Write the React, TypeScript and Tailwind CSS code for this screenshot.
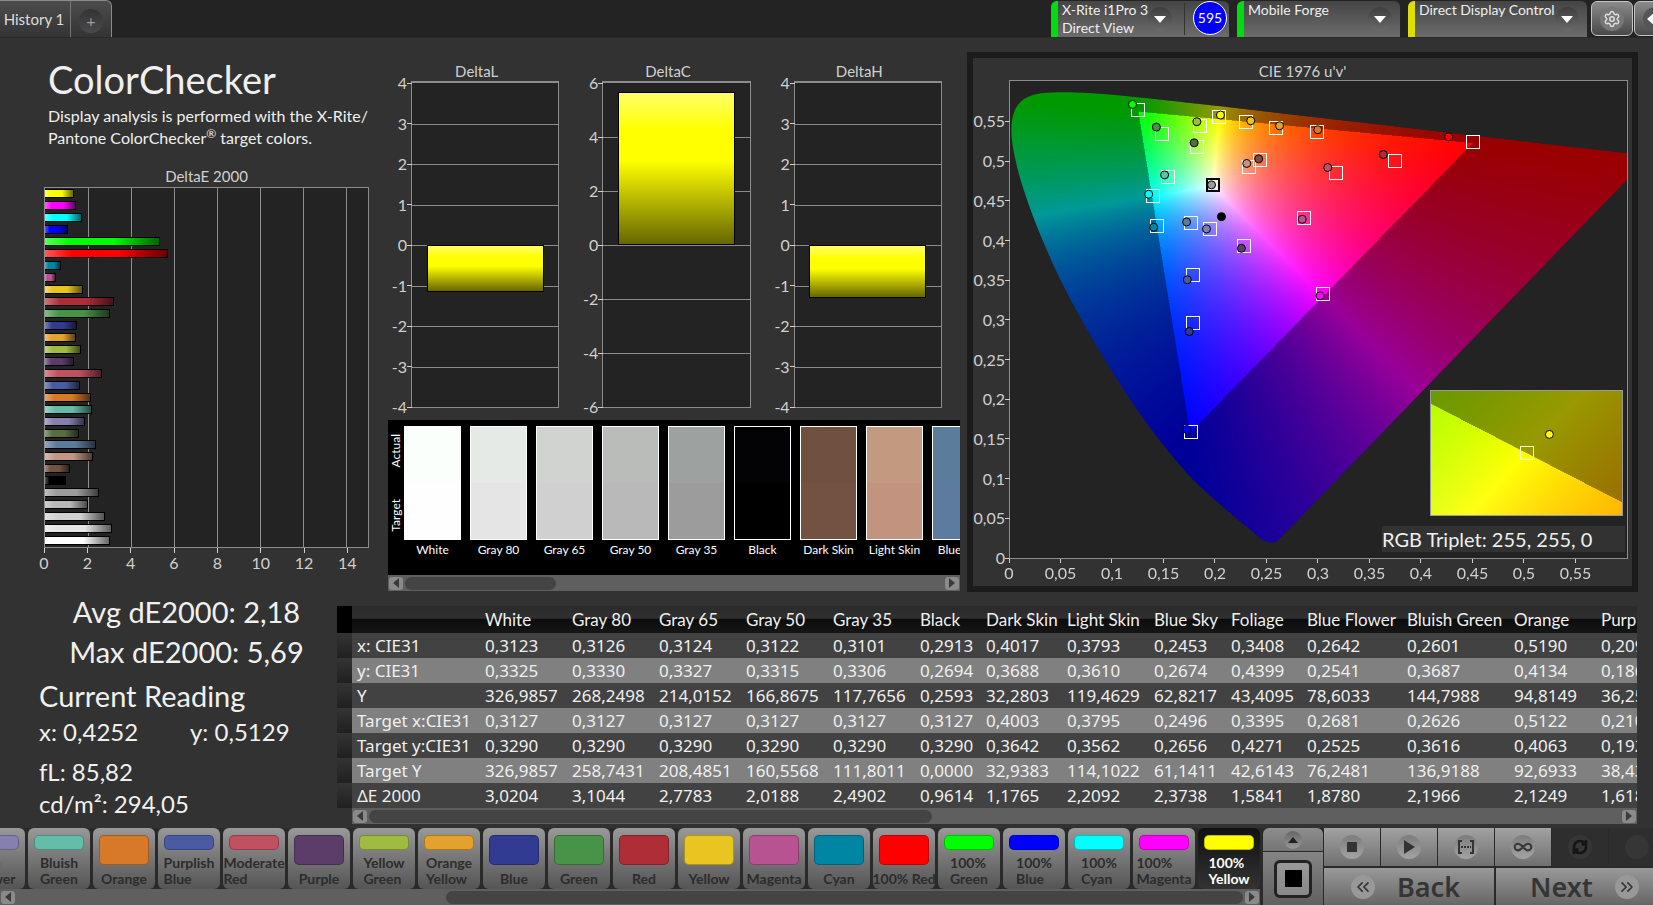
import { useEffect, useRef } from 'react'
import type { ReactNode } from 'react'
import {
  ChevronsLeft,
  ChevronsRight,
  Infinity as InfinityIcon,
  RefreshCw,
  Settings,
} from 'lucide-react'

type Vec2 = [number, number]

const AXIS_MAX = 0.601

const patches = [
  { name: '100% Yellow', color: '#ffff00', dE: 1.35, target: [0.2037, 0.5551], actual: [0.205, 0.5581] },
  { name: '100% Magenta', color: '#ff00ff', dE: 1.44, target: [0.305, 0.3321], actual: [0.3021, 0.3304] },
  { name: '100% Cyan', color: '#00ffff', dE: 1.72, target: [0.139, 0.4562], actual: [0.1351, 0.4583] },
  { name: '100% Blue', color: '#0000ff', dE: 1.07, target: [0.1759, 0.1591], actual: [0.172, 0.162] },
  { name: '100% Green', color: '#00ff00', dE: 5.35, target: [0.1248, 0.5644], actual: [0.1193, 0.5715] },
  { name: '100% Red', color: '#ff0000', dE: 5.69, target: [0.4506, 0.5244], actual: [0.4273, 0.5307] },
  { name: 'Cyan', color: '#0085a3', dE: 0.75, target: [0.1435, 0.4184], actual: [0.14, 0.4167] },
  { name: 'Magenta', color: '#b85391', dE: 0.52, target: [0.2866, 0.428], actual: [0.2846, 0.4268] },
  { name: 'Yellow', color: '#e9c521', dE: 1.77, target: [0.2299, 0.5497], actual: [0.2345, 0.5509] },
  { name: 'Red', color: '#ae2d37', dE: 3.2, target: [0.3752, 0.5], actual: [0.3636, 0.5084] },
  { name: 'Green', color: '#479347', dE: 3.02, target: [0.1477, 0.5345], actual: [0.1426, 0.5429] },
  { name: 'Blue', color: '#323b92', dE: 1.49, target: [0.1782, 0.2955], actual: [0.1746, 0.2854] },
  { name: 'Orange Yellow', color: '#e5a12e', dE: 1.44, target: [0.2587, 0.5417], actual: [0.2626, 0.5446] },
  { name: 'Yellow Green', color: '#9fbb42', dE: 1.67, target: [0.1846, 0.5446], actual: [0.182, 0.5497] },
  { name: 'Purple', color: '#5c3d6a', dE: 1.35, target: [0.2283, 0.3931], actual: [0.2254, 0.3902] },
  { name: 'Moderate Red', color: '#c25160', dE: 2.65, target: [0.3176, 0.4848], actual: [0.3095, 0.492] },
  { name: 'Purplish Blue', color: '#4a5ba3', dE: 1.62, target: [0.1782, 0.3569], actual: [0.1727, 0.3506] },
  { name: 'Orange', color: '#d87829', dE: 2.12, target: [0.2995, 0.5366], actual: [0.2998, 0.5396] },
  { name: 'Bluish Green', color: '#64bda8', dE: 2.2, target: [0.1539, 0.4798], actual: [0.1506, 0.4827] },
  { name: 'Blue Flower', color: '#8580b0', dE: 1.88, target: [0.1947, 0.415], actual: [0.1914, 0.4146] },
  { name: 'Foliage', color: '#576c41', dE: 1.58, target: [0.182, 0.5181], actual: [0.1794, 0.5231] },
  { name: 'Blue Sky', color: '#5d7c9d', dE: 2.37, target: [0.1759, 0.4217], actual: [0.172, 0.4234] },
  { name: 'Light Skin', color: '#c29682', dE: 2.21, target: [0.2328, 0.4928], actual: [0.2306, 0.4971] },
  { name: 'Dark Skin', color: '#735244', dE: 1.18, target: [0.2432, 0.5013], actual: [0.2422, 0.5029] },
  { name: 'Black', color: '#000000', dE: 0.96, target: null, actual: [0.206, 0.4301] },
  { name: 'Gray 35', color: '#9c9c9c', dE: 2.49, target: [0.1976, 0.4697], actual: [0.1963, 0.4701] },
  { name: 'Gray 50', color: '#b8b8b8', dE: 2.02, target: null, actual: null },
  { name: 'Gray 65', color: '#d0d0d0', dE: 2.78, target: null, actual: null },
  { name: 'Gray 80', color: '#e6e6e6', dE: 3.1, target: null, actual: null },
  { name: 'White', color: '#ffffff', dE: 3.02, target: null, actual: null },
]

const swatches = [
  { name: 'White', actual: '#fbfffb', target: '#fefefe' },
  { name: 'Gray 80', actual: '#e5eae6', target: '#e5e5e5' },
  { name: 'Gray 65', actual: '#d1d3d0', target: '#d0d0d0' },
  { name: 'Gray 50', actual: '#babcb9', target: '#b9b9b9' },
  { name: 'Gray 35', actual: '#9da19f', target: '#9c9c9c' },
  { name: 'Black', actual: '#030305', target: '#000000' },
  { name: 'Dark Skin', actual: '#705140', target: '#735242' },
  { name: 'Light Skin', actual: '#c3997f', target: '#c29480' },
  { name: 'Blue Sky', actual: '#5a7d9d', target: '#5d7a9f' },
]

const columns = [
  { name: 'White', width: 'w-[87px]', values: ['0,3123', '0,3325', '326,9857', '0,3127', '0,3290', '326,9857', '3,0204'] },
  { name: 'Gray 80', width: 'w-[87px]', values: ['0,3126', '0,3330', '268,2498', '0,3127', '0,3290', '258,7431', '3,1044'] },
  { name: 'Gray 65', width: 'w-[87px]', values: ['0,3124', '0,3327', '214,0152', '0,3127', '0,3290', '208,4851', '2,7783'] },
  { name: 'Gray 50', width: 'w-[87px]', values: ['0,3122', '0,3315', '166,8675', '0,3127', '0,3290', '160,5568', '2,0188'] },
  { name: 'Gray 35', width: 'w-[87px]', values: ['0,3101', '0,3306', '117,7656', '0,3127', '0,3290', '111,8011', '2,4902'] },
  { name: 'Black', width: 'w-[66px]', values: ['0,2913', '0,2694', '0,2593', '0,3127', '0,3290', '0,0000', '0,9614'] },
  { name: 'Dark Skin', width: 'w-[81px]', values: ['0,4017', '0,3688', '32,2803', '0,4003', '0,3642', '32,9383', '1,1765'] },
  { name: 'Light Skin', width: 'w-[87px]', values: ['0,3793', '0,3610', '119,4629', '0,3795', '0,3562', '114,1022', '2,2092'] },
  { name: 'Blue Sky', width: 'w-[77px]', values: ['0,2453', '0,2674', '62,8217', '0,2496', '0,2656', '61,1411', '2,3738'] },
  { name: 'Foliage', width: 'w-[76px]', values: ['0,3408', '0,4399', '43,4095', '0,3395', '0,4271', '42,6143', '1,5841'] },
  { name: 'Blue Flower', width: 'w-[100px]', values: ['0,2642', '0,2541', '78,6033', '0,2681', '0,2525', '76,2481', '1,8780'] },
  { name: 'Bluish Green', width: 'w-[107px]', values: ['0,2601', '0,3687', '144,7988', '0,2626', '0,3616', '136,9188', '2,1966'] },
  { name: 'Orange', width: 'w-[87px]', values: ['0,5190', '0,4134', '94,8149', '0,5122', '0,4063', '92,6933', '2,1249'] },
  { name: 'Purplish Blue', width: 'w-[117px]', values: ['0,2095', '0,1862', '36,2541', '0,2109', '0,1926', '38,4327', '1,6182'] },
]

const rowNames = ['x: CIE31', 'y: CIE31', 'Y', 'Target x:CIE31', 'Target y:CIE31', 'Target Y', 'ΔE 2000']

const colorButtons = [
  { lines: ['Blue', 'Flower'], color: '#8580b0' },
  { lines: ['Bluish', 'Green'], color: '#64bda8' },
  { lines: ['Orange'], color: '#d87829' },
  { lines: ['Purplish', 'Blue'], color: '#4a5ba3' },
  { lines: ['Moderate', 'Red'], color: '#c25160' },
  { lines: ['Purple'], color: '#5c3d6a' },
  { lines: ['Yellow', 'Green'], color: '#9fbb42' },
  { lines: ['Orange', 'Yellow'], color: '#e5a12e' },
  { lines: ['Blue'], color: '#323b92' },
  { lines: ['Green'], color: '#479347' },
  { lines: ['Red'], color: '#ae2d37' },
  { lines: ['Yellow'], color: '#e9c521' },
  { lines: ['Magenta'], color: '#b85391' },
  { lines: ['Cyan'], color: '#0085a3' },
  { lines: ['100% Red'], color: '#ff0000' },
  { lines: ['100%', 'Green'], color: '#00ff00' },
  { lines: ['100%', 'Blue'], color: '#0000ff' },
  { lines: ['100%', 'Cyan'], color: '#00ffff' },
  { lines: ['100%', 'Magenta'], color: '#ff00ff' },
  { lines: ['100%', 'Yellow'], color: '#ffff00', selected: true },
]

// CIE 1931 xy coordinates of the spectral locus, 380 nm to 700 nm
const locus: Vec2[] = [
  [0.1741, 0.005], [0.1689, 0.0069], [0.1644, 0.0109], [0.1566, 0.0177], [0.144, 0.0297],
  [0.1355, 0.0399], [0.1241, 0.0578], [0.1096, 0.0868], [0.0913, 0.1327], [0.0687, 0.2007],
  [0.0454, 0.295], [0.0235, 0.4127], [0.0082, 0.5384], [0.0039, 0.6548], [0.0139, 0.7502],
  [0.0389, 0.812], [0.0743, 0.8338], [0.1142, 0.8262], [0.1547, 0.8059], [0.1929, 0.7816],
  [0.2296, 0.7543], [0.3016, 0.6923], [0.3731, 0.6245], [0.4441, 0.5547], [0.5125, 0.4866],
  [0.5752, 0.4242], [0.627, 0.3725], [0.6915, 0.3083], [0.726, 0.274], [0.7347, 0.2653],
]

const xyToUv = ([x, y]: Vec2): Vec2 => {
  const d = -2 * x + 12 * y + 3
  return [(4 * x) / d, (9 * y) / d]
}

const uvToXy = ([u, v]: Vec2): Vec2 => {
  const d = 6 * u - 16 * v + 12
  return [(9 * u) / d, (4 * v) / d]
}

const xyToRgb = ([x, y]: Vec2) => {
  const z = 1 - x - y
  const linear = [
    3.2406 * x - 1.5372 * y - 0.4986 * z,
    -0.9689 * x + 1.8758 * y + 0.0415 * z,
    0.0557 * x - 0.204 * y + 1.057 * z,
  ]
  const peak = Math.max(...linear)
  // colours outside Rec. 709 are drawn dimmed
  const level = Math.min(...linear) < 0 ? 153 : 255
  return linear.map((c) => (Math.max(c, 0) / peak) * level)
}

const paint = (canvas: HTMLCanvasElement, toXy: (fx: number, fy: number) => Vec2) => {
  const ctx = canvas.getContext('2d')
  if (!ctx) return null
  const { width, height } = canvas
  const image = ctx.createImageData(width, height)
  for (let row = 0; row < height; row++) {
    for (let col = 0; col < width; col++) {
      const [r, g, b] = xyToRgb(toXy((col + 0.5) / width, 1 - (row + 0.5) / height))
      const i = (row * width + col) * 4
      image.data[i] = r
      image.data[i + 1] = g
      image.data[i + 2] = b
      image.data[i + 3] = 255
    }
  }
  ctx.putImageData(image, 0, 0)
  return ctx
}

const GamutCanvas = () => {
  const ref = useRef<HTMLCanvasElement>(null)

  useEffect(() => {
    const canvas = ref.current
    if (!canvas) return
    const ctx = paint(canvas, (fx, fy) => uvToXy([fx * AXIS_MAX, fy * AXIS_MAX]))
    if (!ctx) return
    const points = locus.map(xyToUv).map(([u, v]) => [
      (u / AXIS_MAX) * canvas.width,
      (1 - v / AXIS_MAX) * canvas.height,
    ])
    const last = points.length - 1
    const [x0, y0] = points[0]
    const [xEnd, yEnd] = points[last]
    ctx.globalCompositeOperation = 'destination-in'
    ctx.beginPath()
    ctx.moveTo(x0 + (xEnd - x0) * 0.012, y0 + (yEnd - y0) * 0.012)
    ctx.quadraticCurveTo(x0, y0, points[1][0], points[1][1])
    // Catmull-Rom spline through the remaining points
    for (let i = 1; i < last; i++) {
      const [ax, ay] = points[i - 1]
      const [bx, by] = points[i]
      const [cx, cy] = points[i + 1]
      const [dx, dy] = points[Math.min(i + 2, last)]
      ctx.bezierCurveTo(
        bx + (cx - ax) / 6,
        by + (cy - ay) / 6,
        cx - (dx - bx) / 6,
        cy - (dy - by) / 6,
        cx,
        cy,
      )
    }
    ctx.closePath()
    ctx.fill()
  }, [])

  return <canvas ref={ref} width={1238} height={952} className="absolute inset-0 h-full w-full" />
}

const InsetCanvas = () => {
  const ref = useRef<HTMLCanvasElement>(null)

  useEffect(() => {
    if (!ref.current) return
    paint(ref.current, (fx, fy) => [0.4193 + (fx - 0.5) * 0.05, 0.5053 + (fy - 0.5) * 0.05])
  }, [])

  return <canvas ref={ref} width={380} height={246} className="absolute inset-0 h-full w-full" />
}

const range = (from: number, to: number, step: number) =>
  Array.from({ length: Math.round((to - from) / step) + 1 }, (_, i) => from + i * step)

const formatTick = (value: number) => String(Math.round(value * 100) / 100).replace('.', ',')

const DeltaEChart = () => (
  <figure className="pr-[19px] pl-11 text-base leading-5 text-[#d0d0d0]">
    <figcaption className="pb-px text-center text-[15px]">DeltaE 2000</figcaption>
    <div className="relative h-[361px] border border-[#8c8c8c] bg-[#232323]">
      {range(2, 14, 2).map((t) => (
        <span
          key={t}
          className="absolute inset-y-0 w-px bg-[#8c8c8c]"
          style={{ left: `${(t / 15) * 100}%` }}
        />
      ))}
      <div className="relative flex h-full flex-col justify-around">
        {patches.map((p) => (
          <span
            key={p.name}
            className="h-[9px] border border-l-0 border-black bg-[linear-gradient(90deg,rgba(255,255,255,.35),transparent_22%,transparent_60%,rgba(0,0,0,.6))]"
            style={{ width: `${(p.dE / 15) * 100}%`, backgroundColor: p.color }}
          />
        ))}
      </div>
    </div>
    <div className="relative h-7">
      {range(0, 14, 2).map((t) => (
        <span
          key={t}
          className="absolute top-0 flex w-8 -translate-x-1/2 flex-col items-center"
          style={{ left: `${(t / 15) * 100}%` }}
        >
          <span className="h-[5px] w-px bg-[#d0d0d0]" />
          {t}
        </span>
      ))}
    </div>
  </figure>
)

type DeltaProps = { title: string; value: number; max: number; step: number }

const DeltaChart = ({ title, value, max, step }: DeltaProps) => {
  const top = value > 0 ? (max - value) / (2 * max) : 0.5
  return (
    <figure className="min-w-0 flex-1 text-base leading-5 text-[#d0d0d0]">
      <figcaption className="pl-1.5 text-center text-[15px]">{title}</figcaption>
      <div className="relative ml-[23px] h-[327px] border border-t-2 border-[#8c8c8c] bg-[#232323]">
        {range(-max, max, step).map((t) => (
          <span
            key={t}
            className="absolute -left-6 flex w-6 -translate-y-1/2 items-center justify-end"
            style={{ top: `${((max - t) / (2 * max)) * 100}%` }}
          >
            {t}
            <span className="h-px w-[5px] bg-[#d0d0d0]" />
          </span>
        ))}
        {range(-max + step, max - step, step).map((t) => (
          <span
            key={t}
            className="absolute inset-x-0 h-px bg-[#8c8c8c]"
            style={{ top: `${((max - t) / (2 * max)) * 100}%` }}
          />
        ))}
        <span
          className="absolute inset-x-[10%] border border-black bg-[linear-gradient(#ffff66,#ffff00_25%,#ffff00_45%,#666600)]"
          style={{ top: `${top * 100}%`, height: `${(Math.abs(value) / (2 * max)) * 100}%` }}
        />
      </div>
    </figure>
  )
}

const Arrow = ({ left = false }: { left?: boolean }) => (
  <button
    type="button"
    aria-label={left ? 'Scroll left' : 'Scroll right'}
    className="flex h-[13px] w-3.5 shrink-0 items-center justify-center rounded-[3px] bg-[#8a8a8a]"
  >
    <svg viewBox="0 0 8 10" className="h-2.5 w-2">
      <path d={left ? 'M7 0v10L1 5z' : 'M1 0v10l6-5z'} fill="#3a3a3a" />
    </svg>
  </button>
)

const ScrollBar = ({ thumb }: { thumb: string }) => (
  <div className="flex h-4 items-center gap-0.5 bg-[#5f5f5f] px-px">
    <Arrow left />
    <div className="flex h-[13px] flex-1">
      <span className={`h-full rounded-full bg-[#444444] ${thumb}`} />
    </div>
    <Arrow />
  </div>
)

const SwatchPanel = () => (
  <section className="mt-3 bg-black">
    <div className="flex h-[155px] overflow-hidden pt-1.5 text-xs leading-4 text-white">
      <div className="flex h-[114px] w-4 shrink-0 flex-col items-center justify-between py-2">
        <span className="rotate-180 [writing-mode:vertical-rl]">Actual</span>
        <span className="rotate-180 [writing-mode:vertical-rl]">Target</span>
      </div>
      <div className="flex gap-[9px]">
        {swatches.map((s) => (
          <div key={s.name} className="flex w-[57px] shrink-0 flex-col items-center gap-0.5 whitespace-nowrap">
            <div className="flex h-[114px] w-full flex-col border border-white">
              <span className="flex-1" style={{ backgroundColor: s.actual }} />
              <span className="flex-1" style={{ backgroundColor: s.target }} />
            </div>
            {s.name}
          </div>
        ))}
      </div>
    </div>
    <ScrollBar thumb="w-[28%]" />
  </section>
)

const CieChart = () => (
  <section className="mt-3.5 mr-[15px] flex min-w-0 flex-1 flex-col border-[6px] border-[#1b1b1b] pr-1 pl-9 text-base leading-5 text-[#d0d0d0]">
    <h2 className="pt-1 pr-8 text-center text-[15px] leading-[18px]">CIE 1976 u'v'</h2>
    <div className="relative h-[479px] border border-[#8c8c8c] bg-[#232323]">
      <GamutCanvas />
      <svg className="absolute inset-0 h-full w-full" aria-hidden="true">
        {patches.map(
          (p) =>
            p.target && (
              <svg
                key={p.name}
                x={`${(p.target[0] / AXIS_MAX) * 100}%`}
                y={`${(1 - p.target[1] / AXIS_MAX) * 100}%`}
                overflow="visible"
              >
                <rect
                  x={p.name === 'Gray 35' ? -6 : -6.5}
                  y={p.name === 'Gray 35' ? -6 : -6.5}
                  width={p.name === 'Gray 35' ? 12 : 13}
                  height={p.name === 'Gray 35' ? 12 : 13}
                  fill="none"
                  stroke={p.name === 'Gray 35' ? '#000' : '#fff'}
                  strokeWidth={p.name === 'Gray 35' ? 2 : 1}
                  shapeRendering="crispEdges"
                />
              </svg>
            ),
        )}
        {patches.map(
          (p) =>
            p.actual && (
              <svg
                key={p.name}
                x={`${(p.actual[0] / AXIS_MAX) * 100}%`}
                y={`${(1 - p.actual[1] / AXIS_MAX) * 100}%`}
                overflow="visible"
              >
                <circle r="4" fill={p.color} stroke="#000" />
              </svg>
            ),
        )}
      </svg>
      {range(0, 0.55, 0.05).map((t) => (
        <span
          key={t}
          className="absolute -left-10 flex w-10 -translate-y-1/2 items-center justify-end"
          style={{ top: `${(1 - t / AXIS_MAX) * 100}%` }}
        >
          {formatTick(t)}
          <span className="h-px w-[5px] bg-[#d0d0d0]" />
        </span>
      ))}
      <div className="absolute right-1 bottom-[42px] h-[126px] w-[193px] overflow-hidden border border-[#9a9a9a]">
        <InsetCanvas />
        <svg className="absolute inset-0 h-full w-full" aria-hidden="true">
          <svg x="50%" y="50%" overflow="visible">
            <rect
              x="-6.5"
              y="-6.5"
              width="13"
              height="13"
              fill="none"
              stroke="#ffffc0"
              shapeRendering="crispEdges"
            />
          </svg>
          <svg x="62%" y="35%" overflow="visible">
            <circle r="4" fill="#ffff00" stroke="#000" />
          </svg>
        </svg>
      </div>
      <p className="absolute right-0.5 bottom-1.5 w-[243px] bg-[#323232] text-xl leading-[26px] text-[#efefef]">
        RGB Triplet: 255, 255, 0
      </p>
    </div>
    <div className="relative h-[27px]">
      {range(0, 0.55, 0.05).map((t) => (
        <span
          key={t}
          className="absolute top-0 flex w-10 -translate-x-1/2 flex-col items-center"
          style={{ left: `${(t / AXIS_MAX) * 100}%` }}
        >
          <span className="h-1 w-px bg-[#d0d0d0]" />
          {formatTick(t)}
        </span>
      ))}
    </div>
  </section>
)

const Readings = () => (
  <section className="w-[337px] shrink-0 text-[#f0f0f0]">
    <div className="pl-9 text-center text-[29px] leading-10">
      <p>Avg dE2000: 2,18</p>
      <p>Max dE2000: 5,69</p>
    </div>
    <div className="pt-1 pl-[39px] text-2xl leading-8">
      <h2 className="text-[29px] leading-10">Current Reading</h2>
      <div className="flex pb-2">
        <p className="w-[151px]">x: 0,4252</p>
        <p>y: 0,5129</p>
      </div>
      <p>fL: 85,82</p>
      <p>cd/m²: 294,05</p>
    </div>
  </section>
)

const ReadingsTable = () => (
  <section className="mr-4 min-w-0 flex-1 pt-3.5">
    <div className="overflow-hidden">
      <table className="w-[1376px] table-fixed border-collapse text-left whitespace-nowrap text-[#efefef]">
        <thead>
          <tr className="h-[27px] bg-[linear-gradient(#2a2a2a,#303030_45%,#0c0c0c_50%,#161616)] text-[17px] leading-5">
            <td className="w-[15px] bg-black" />
            <td className="w-32" />
            {columns.map((c) => (
              <th key={c.name} scope="col" className={`pl-[5px] font-normal ${c.width}`}>
                {c.name}
              </th>
            ))}
          </tr>
        </thead>
        <tbody className="font-['Noto_Sans',sans-serif] text-[17px] leading-5">
          {rowNames.map((name, i) => (
            <tr key={name} className="h-[25px] bg-[#424242] even:bg-[#808080]">
              <td className="bg-linear-to-b from-[#343434] to-[#202020]" />
              <th scope="row" className="pl-[5px] font-normal">
                {name}
              </th>
              {columns.map((c) => (
                <td key={c.name} className="pl-[5px]">
                  {c.values[i]}
                </td>
              ))}
            </tr>
          ))}
        </tbody>
      </table>
    </div>
    <div className="pl-[15px]">
      <ScrollBar thumb="w-[45%]" />
    </div>
  </section>
)

type DeviceProps = { lines: string[]; bar: string; width: string; children?: ReactNode }

const Device = ({ lines, bar, width, children }: DeviceProps) => (
  <div
    className={`flex overflow-hidden rounded-t-md bg-linear-to-b from-[#454545] to-[#6c6c6c] text-sm leading-[18px] text-[#efefef] ${width}`}
  >
    <span className={`w-[7px] shrink-0 ${bar}`} />
    <p className="min-w-0 flex-1 pl-1 whitespace-nowrap">
      {lines.map((line) => (
        <span key={line} className="block">
          {line}
        </span>
      ))}
    </p>
    <button
      type="button"
      aria-label={`${lines[0]} menu`}
      className="mt-1.5 mr-2 flex h-6 w-6 shrink-0 items-center justify-center rounded-full bg-linear-to-b from-[#3e3e3e] to-[#6a6a6a]"
    >
      <svg viewBox="0 0 12 7" className="h-[7px] w-3">
        <path d="M0 0h12L6 7z" fill="#fff" />
      </svg>
    </button>
    {children}
  </div>
)

const TopBar = () => (
  <header className="flex h-[38px] border-b border-[#2a2a2a] bg-[#232323]">
    <nav className="flex rounded-tr-md border-t border-r border-[#8a8a8a] bg-linear-to-b from-[#4c4c4c] to-[#343434]">
      <button type="button" className="w-[71px] border-r border-[#777] pr-0.5 text-[15px] whitespace-nowrap text-[#dcdcdc]">
        History 1
      </button>
      <button type="button" aria-label="Add history" className="flex w-10 items-center justify-center">
        <span className="mt-1 flex h-6 w-6 items-center justify-center rounded-full bg-linear-to-b from-[#333] to-[#4a4a4a] text-base text-[#9a9a9a]">
          +
        </span>
      </button>
    </nav>
    <div className="ml-auto flex shrink-0 pt-px">
      <Device lines={['X-Rite i1Pro 3', 'Direct View']} bar="bg-[#00dd0f]" width="mr-2 w-[178px]">
        <span className="my-0.5 ml-1 w-px bg-[#333]" />
        <span className="mr-0.5 ml-2 flex h-[34px] w-[34px] shrink-0 items-center justify-center rounded-full border border-white bg-[#0000ff] text-sm text-white">
          595
        </span>
      </Device>
      <Device lines={['Mobile Forge']} bar="bg-[#00dd0f]" width="mr-2 w-[163px]" />
      <Device lines={['Direct Display Control']} bar="bg-[#dede00]" width="mr-1 w-[179px]" />
      <button
        type="button"
        aria-label="Settings"
        className="flex h-[35px] w-[42px] items-center justify-center rounded-md border border-[#c4c4c4] bg-linear-to-b from-[#8a8a8a] to-[#4a4a4a]"
      >
        <span className="flex h-6 w-6 items-center justify-center rounded-full bg-[#777] text-[#dcdcdc]">
          <Settings size={18} />
        </span>
      </button>
      <div className="ml-px w-[19px] overflow-hidden">
        <button
          type="button"
          aria-label="Collapse"
          className="flex h-[35px] w-[42px] items-center justify-center rounded-md border border-[#c4c4c4] bg-linear-to-b from-[#8a8a8a] to-[#4a4a4a]"
        >
          <span className="flex h-6 w-6 items-center justify-center rounded-full bg-[#555]">
            <svg viewBox="0 0 16 14" className="h-3.5 w-4">
              <path d="M8 0v14L0 7z" fill="#fff" />
            </svg>
          </span>
        </button>
      </div>
    </div>
  </header>
)

type ToolProps = { label: string; dark?: boolean; children?: ReactNode }

const Tool = ({ label, dark, children }: ToolProps) => (
  <button
    type="button"
    aria-label={label}
    className={`flex h-[38px] w-[56px] shrink-0 items-center justify-center ${
      dark ? 'bg-[#2e2e2e]' : 'bg-linear-to-b from-[#a2a2a2] to-[#707070]'
    }`}
  >
    <span
      className={`flex h-6 w-6 items-center justify-center rounded-full ${
        dark ? 'bg-[#363636] text-[#151515]' : 'bg-linear-to-b from-[#7c7c7c] to-[#a4a4a4] text-[#383838]'
      }`}
    >
      {children}
    </span>
  </button>
)

const BottomBar = () => (
  <footer className="mt-1 flex bg-[#2a2a2a]">
    <div className="flex min-w-0 flex-1 flex-col pr-[3px]">
      <div className="flex h-[61px] justify-end gap-[3px] overflow-hidden">
        {colorButtons.map((b) => (
          <button
            key={b.lines.join(' ')}
            type="button"
            aria-pressed={!!b.selected}
            className={`flex w-[62px] shrink-0 flex-col items-center justify-between rounded-md pt-[7px] text-sm leading-4 font-bold whitespace-nowrap ${
              b.selected
                ? 'bg-linear-to-b from-[#111] to-[#333] text-white'
                : 'bg-linear-to-b from-[#999] to-[#555] text-[#2c2c2c]'
            }`}
          >
            <span
              className={`w-[50px] rounded-[5px] border border-black/25 ${b.lines.length > 1 ? 'h-[15px]' : 'h-[30px]'}`}
              style={{ backgroundColor: b.color }}
            />
            <span className="pb-0.5 text-left">
              {b.lines.map((line) => (
                <span key={line} className="block">
                  {line}
                </span>
              ))}
            </span>
          </button>
        ))}
      </div>
      <ScrollBar thumb="ml-auto w-[65%]" />
    </div>

    <div className="mr-px flex w-[60px] shrink-0 flex-col gap-px">
      <button
        type="button"
        aria-label="Expand"
        className="flex h-[23px] items-center justify-center rounded-t-md bg-linear-to-b from-[#8e8e8e] to-[#747474]"
      >
        <span className="flex h-[18px] w-[18px] items-center justify-center rounded-full bg-linear-to-b from-[#666] to-[#999]">
          <svg viewBox="0 0 10 6" className="h-1.5 w-2.5">
            <path d="M0 6h10L5 0z" fill="#222" />
          </svg>
        </span>
      </button>
      <button
        type="button"
        aria-label="Pattern window"
        className="flex flex-1 items-center justify-center bg-linear-to-b from-[#858585] to-[#606060]"
      >
        <span className="flex h-[38px] w-[38px] items-center justify-center rounded-md border-[3px] border-[#222] bg-linear-to-b from-[#999] to-[#888]">
          <span className="h-[17px] w-[17px] bg-black" />
        </span>
      </button>
    </div>

    <div className="flex w-[329px] shrink-0 flex-col gap-0.5 overflow-hidden">
      <div className="flex gap-px">
        <Tool label="Stop">
          <span className="h-2.5 w-2.5 bg-[#333]" />
        </Tool>
        <Tool label="Play">
          <svg viewBox="0 0 12 14" className="h-3.5 w-3">
            <path d="M1 0v14l11-7z" fill="#333" />
          </svg>
        </Tool>
        <Tool label="Read series">
          <svg viewBox="0 0 16 14" className="h-3.5 w-4" fill="none" stroke="#333" strokeWidth="2">
            <path d="M4 1H1v12h3M12 1h3v12h-3" />
            <path d="M3 7h10" strokeDasharray="2 1" />
          </svg>
        </Tool>
        <Tool label="Continuous">
          <InfinityIcon size={20} strokeWidth={2.5} />
        </Tool>
        <Tool label="Refresh" dark>
          <RefreshCw size={16} strokeWidth={4} />
        </Tool>
        <Tool label="More" dark />
      </div>
      <div className="flex flex-1 gap-0.5 font-['Noto_Sans',sans-serif] text-[27px] leading-8 font-semibold text-[#353535]">
        <button
          type="button"
          className="flex w-[170px] shrink-0 items-center gap-[22px] bg-linear-to-b from-[#999] to-[#666] pl-[27px]"
        >
          <span className="flex h-6 w-6 items-center justify-center rounded-full bg-[#989898]">
            <ChevronsLeft size={20} />
          </span>
          Back
        </button>
        <button
          type="button"
          className="flex w-[170px] shrink-0 items-center gap-[22px] bg-linear-to-b from-[#999] to-[#666] pl-[34px]"
        >
          Next
          <span className="flex h-6 w-6 items-center justify-center rounded-full bg-[#989898]">
            <ChevronsRight size={20} />
          </span>
        </button>
      </div>
    </div>
  </footer>
)

const App = () => {
  return (
    <div className="flex min-h-screen flex-col overflow-hidden bg-[#323232] font-[Lato,sans-serif]">
      <TopBar />
      <main>
        <div className="flex">
          <section className="w-[388px] shrink-0">
            <div className="pt-4 pb-[17px] pl-12 whitespace-nowrap text-[#efefef]">
              <h1 className="text-[38px] leading-[51px]">ColorChecker</h1>
              <p className="text-base leading-[22px]">
                Display analysis is performed with the X-Rite/
                <br />
                Pantone ColorChecker<span className="align-text-top text-xs leading-none">®</span> target colors.
              </p>
            </div>
            <DeltaEChart />
          </section>
          <section className="mr-[7px] w-[572px] shrink-0 pt-[23px]">
            <div className="flex gap-5 pr-[18px]">
              <DeltaChart title="DeltaL" value={-1.15} max={4} step={1} />
              <DeltaChart title="DeltaC" value={5.65} max={6} step={2} />
              <DeltaChart title="DeltaH" value={-1.32} max={4} step={1} />
            </div>
            <SwatchPanel />
          </section>
          <CieChart />
        </div>
        <div className="flex">
          <Readings />
          <ReadingsTable />
        </div>
      </main>
      <BottomBar />
    </div>
  )
}

export default App
